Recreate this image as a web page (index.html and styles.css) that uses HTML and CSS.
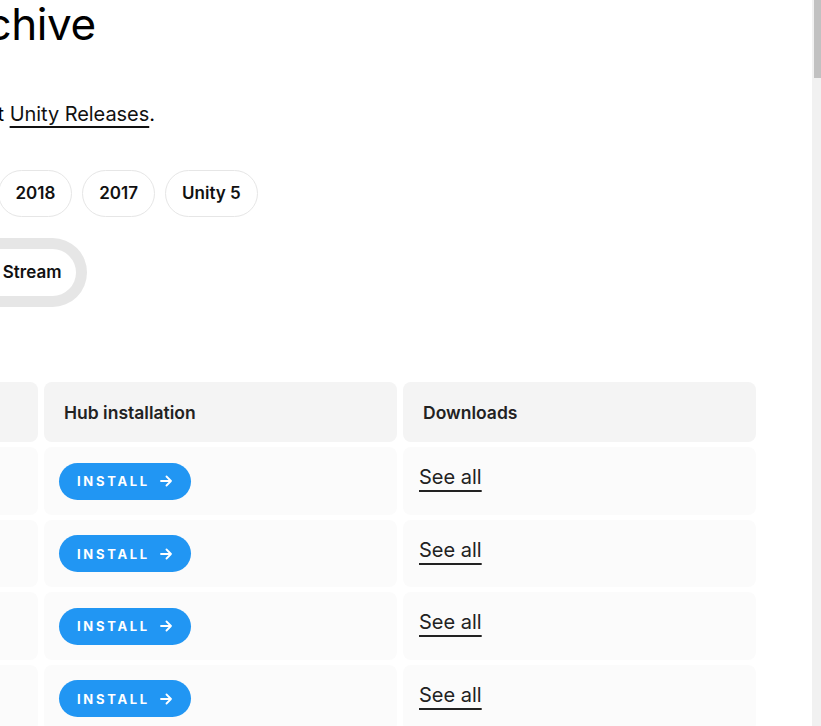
FILE: index.html
```html
<!DOCTYPE html>
<html lang="en">
<head>
<meta charset="utf-8">
<title>Download Archive</title>
<link rel="stylesheet" href="styles.css">
</head>
<body>
<main class="page">
  <h1 class="title">Download Archive</h1>
  <p class="intro">Get the latest release notes at <a class="text-link" href="#">Unity Releases</a>.</p>

  <div class="pills">
    <button class="pill">Unity 6</button>
    <button class="pill">2020</button>
    <button class="pill">2019</button>
    <button class="pill">2018</button>
    <button class="pill">2017</button>
    <button class="pill">Unity 5</button>
  </div>

  <div class="tabs">
    <button class="tab">All versions</button>
    <button class="tab">LTS</button>
    <button class="tab tab-active">Tech Stream</button>
  </div>

  <div class="table">
    <div class="cell head">Version</div>
    <div class="cell head">Hub installation</div>
    <div class="cell head">Downloads</div>

    <div class="cell body">Unity 2018.4.36</div>
    <div class="cell body"><a class="install" href="#">INSTALL <svg class="arrow" viewBox="0 0 12 12" width="12" height="12"><path d="M1 6H11M6.5 1.5L11 6L6.5 10.5" fill="none" stroke="#fff" stroke-width="1.8" stroke-linecap="round" stroke-linejoin="round"/></svg></a></div>
    <div class="cell body"><a class="see-all" href="#">See all</a></div>

    <div class="cell body">Unity 2018.4.35</div>
    <div class="cell body"><a class="install" href="#">INSTALL <svg class="arrow" viewBox="0 0 12 12" width="12" height="12"><path d="M1 6H11M6.5 1.5L11 6L6.5 10.5" fill="none" stroke="#fff" stroke-width="1.8" stroke-linecap="round" stroke-linejoin="round"/></svg></a></div>
    <div class="cell body"><a class="see-all" href="#">See all</a></div>

    <div class="cell body">Unity 2018.4.34</div>
    <div class="cell body"><a class="install" href="#">INSTALL <svg class="arrow" viewBox="0 0 12 12" width="12" height="12"><path d="M1 6H11M6.5 1.5L11 6L6.5 10.5" fill="none" stroke="#fff" stroke-width="1.8" stroke-linecap="round" stroke-linejoin="round"/></svg></a></div>
    <div class="cell body"><a class="see-all" href="#">See all</a></div>

    <div class="cell body">Unity 2018.4.33</div>
    <div class="cell body"><a class="install" href="#">INSTALL <svg class="arrow" viewBox="0 0 12 12" width="12" height="12"><path d="M1 6H11M6.5 1.5L11 6L6.5 10.5" fill="none" stroke="#fff" stroke-width="1.8" stroke-linecap="round" stroke-linejoin="round"/></svg></a></div>
    <div class="cell body"><a class="see-all" href="#">See all</a></div>

    <div class="cell body">Unity 2018.4.32</div>
    <div class="cell body"><a class="install" href="#">INSTALL <svg class="arrow" viewBox="0 0 12 12" width="12" height="12"><path d="M1 6H11M6.5 1.5L11 6L6.5 10.5" fill="none" stroke="#fff" stroke-width="1.8" stroke-linecap="round" stroke-linejoin="round"/></svg></a></div>
    <div class="cell body"><a class="see-all" href="#">See all</a></div>
  </div>
</main>
<div class="scrollbar"><div class="scrollbar-thumb"></div></div>
</body>
</html>
```
FILE: styles.css
```css
html {
  overflow: hidden;
}
body {
  margin: 0;
  background: #fff;
  color: #000;
  font-family: "Inter", "Noto Sans", sans-serif;
}
.page {
  margin-left: -276px;
  width: 1032px;
}
.title {
  margin: 0;
  font-size: 44px;
  font-weight: 400;
  line-height: 1.1;
  letter-spacing: -0.42px;
  color: #000;
}
.intro {
  margin: 51px 0 0;
  font-size: 20px;
  line-height: 31px;
  letter-spacing: -0.05px;
  white-space: nowrap;
  color: #000;
}
.text-link {
  color: #111;
  text-decoration: underline;
  text-decoration-thickness: 2px;
  text-underline-offset: 5px;
}
.pills {
  display: flex;
  gap: 10px;
  margin-top: 40px;
}
.pill {
  font-family: inherit;
  font-size: 17px;
  font-weight: 600;
  line-height: 23px;
  padding: 11px 16px;
  border: 1px solid #e6e6e6;
  border-radius: 24px;
  background: #fff;
  color: #111;
  white-space: nowrap;
}
.tabs {
  display: inline-flex;
  gap: 11px;
  margin-top: 21px;
  padding: 11px;
  background: #e6e6e6;
  border-radius: 35px;
}
.tab {
  font-family: inherit;
  font-size: 17px;
  font-weight: 600;
  line-height: 23px;
  padding: 12px 15px;
  border: 0;
  border-radius: 24px;
  background: transparent;
  color: #111;
  white-space: nowrap;
}
.tab-active {
  background: #fff;
}
.table {
  display: grid;
  grid-template-columns: 314px 353px 353px;
  grid-auto-rows: 67.5px;
  grid-template-rows: 60px;
  column-gap: 6px;
  row-gap: 5px;
  margin-top: 75px;
}
.cell {
  display: flex;
  align-items: center;
  border-radius: 8px;
}
.head {
  background: #f4f4f4;
  padding: 0 20px;
  font-size: 17.5px;
  font-weight: 600;
  color: #222;
}
.body {
  background: #fbfbfb;
  padding: 0 15px 0 16px;
  font-size: 18px;
  color: #222;
}
.cell.body:has(.install) {
  padding-left: 15px;
}
.install {
  display: inline-flex;
  align-items: center;
  gap: 10px;
  height: 37px;
  padding: 0 19px 0 18px;
  box-sizing: border-box;
  border-radius: 19px;
  background: #2196f3;
  color: #fff;
  font-size: 13px;
  font-weight: 700;
  letter-spacing: 2.7px;
  text-decoration: none;
}
.arrow {
  display: block;
}
.see-all {
  display: block;
  margin-bottom: 8px;
  font-size: 20px;
  line-height: 26px;
  color: #222;
  text-decoration: underline;
  text-decoration-thickness: 2px;
  text-underline-offset: 6px;
}
.scrollbar {
  position: fixed;
  top: 0;
  right: 0;
  width: 9px;
  height: 100%;
  background: #f1f1f1;
}
.scrollbar-thumb {
  margin-left: 2px;
  width: 7px;
  height: 78px;
  background: #c1c1c1;
}
```
